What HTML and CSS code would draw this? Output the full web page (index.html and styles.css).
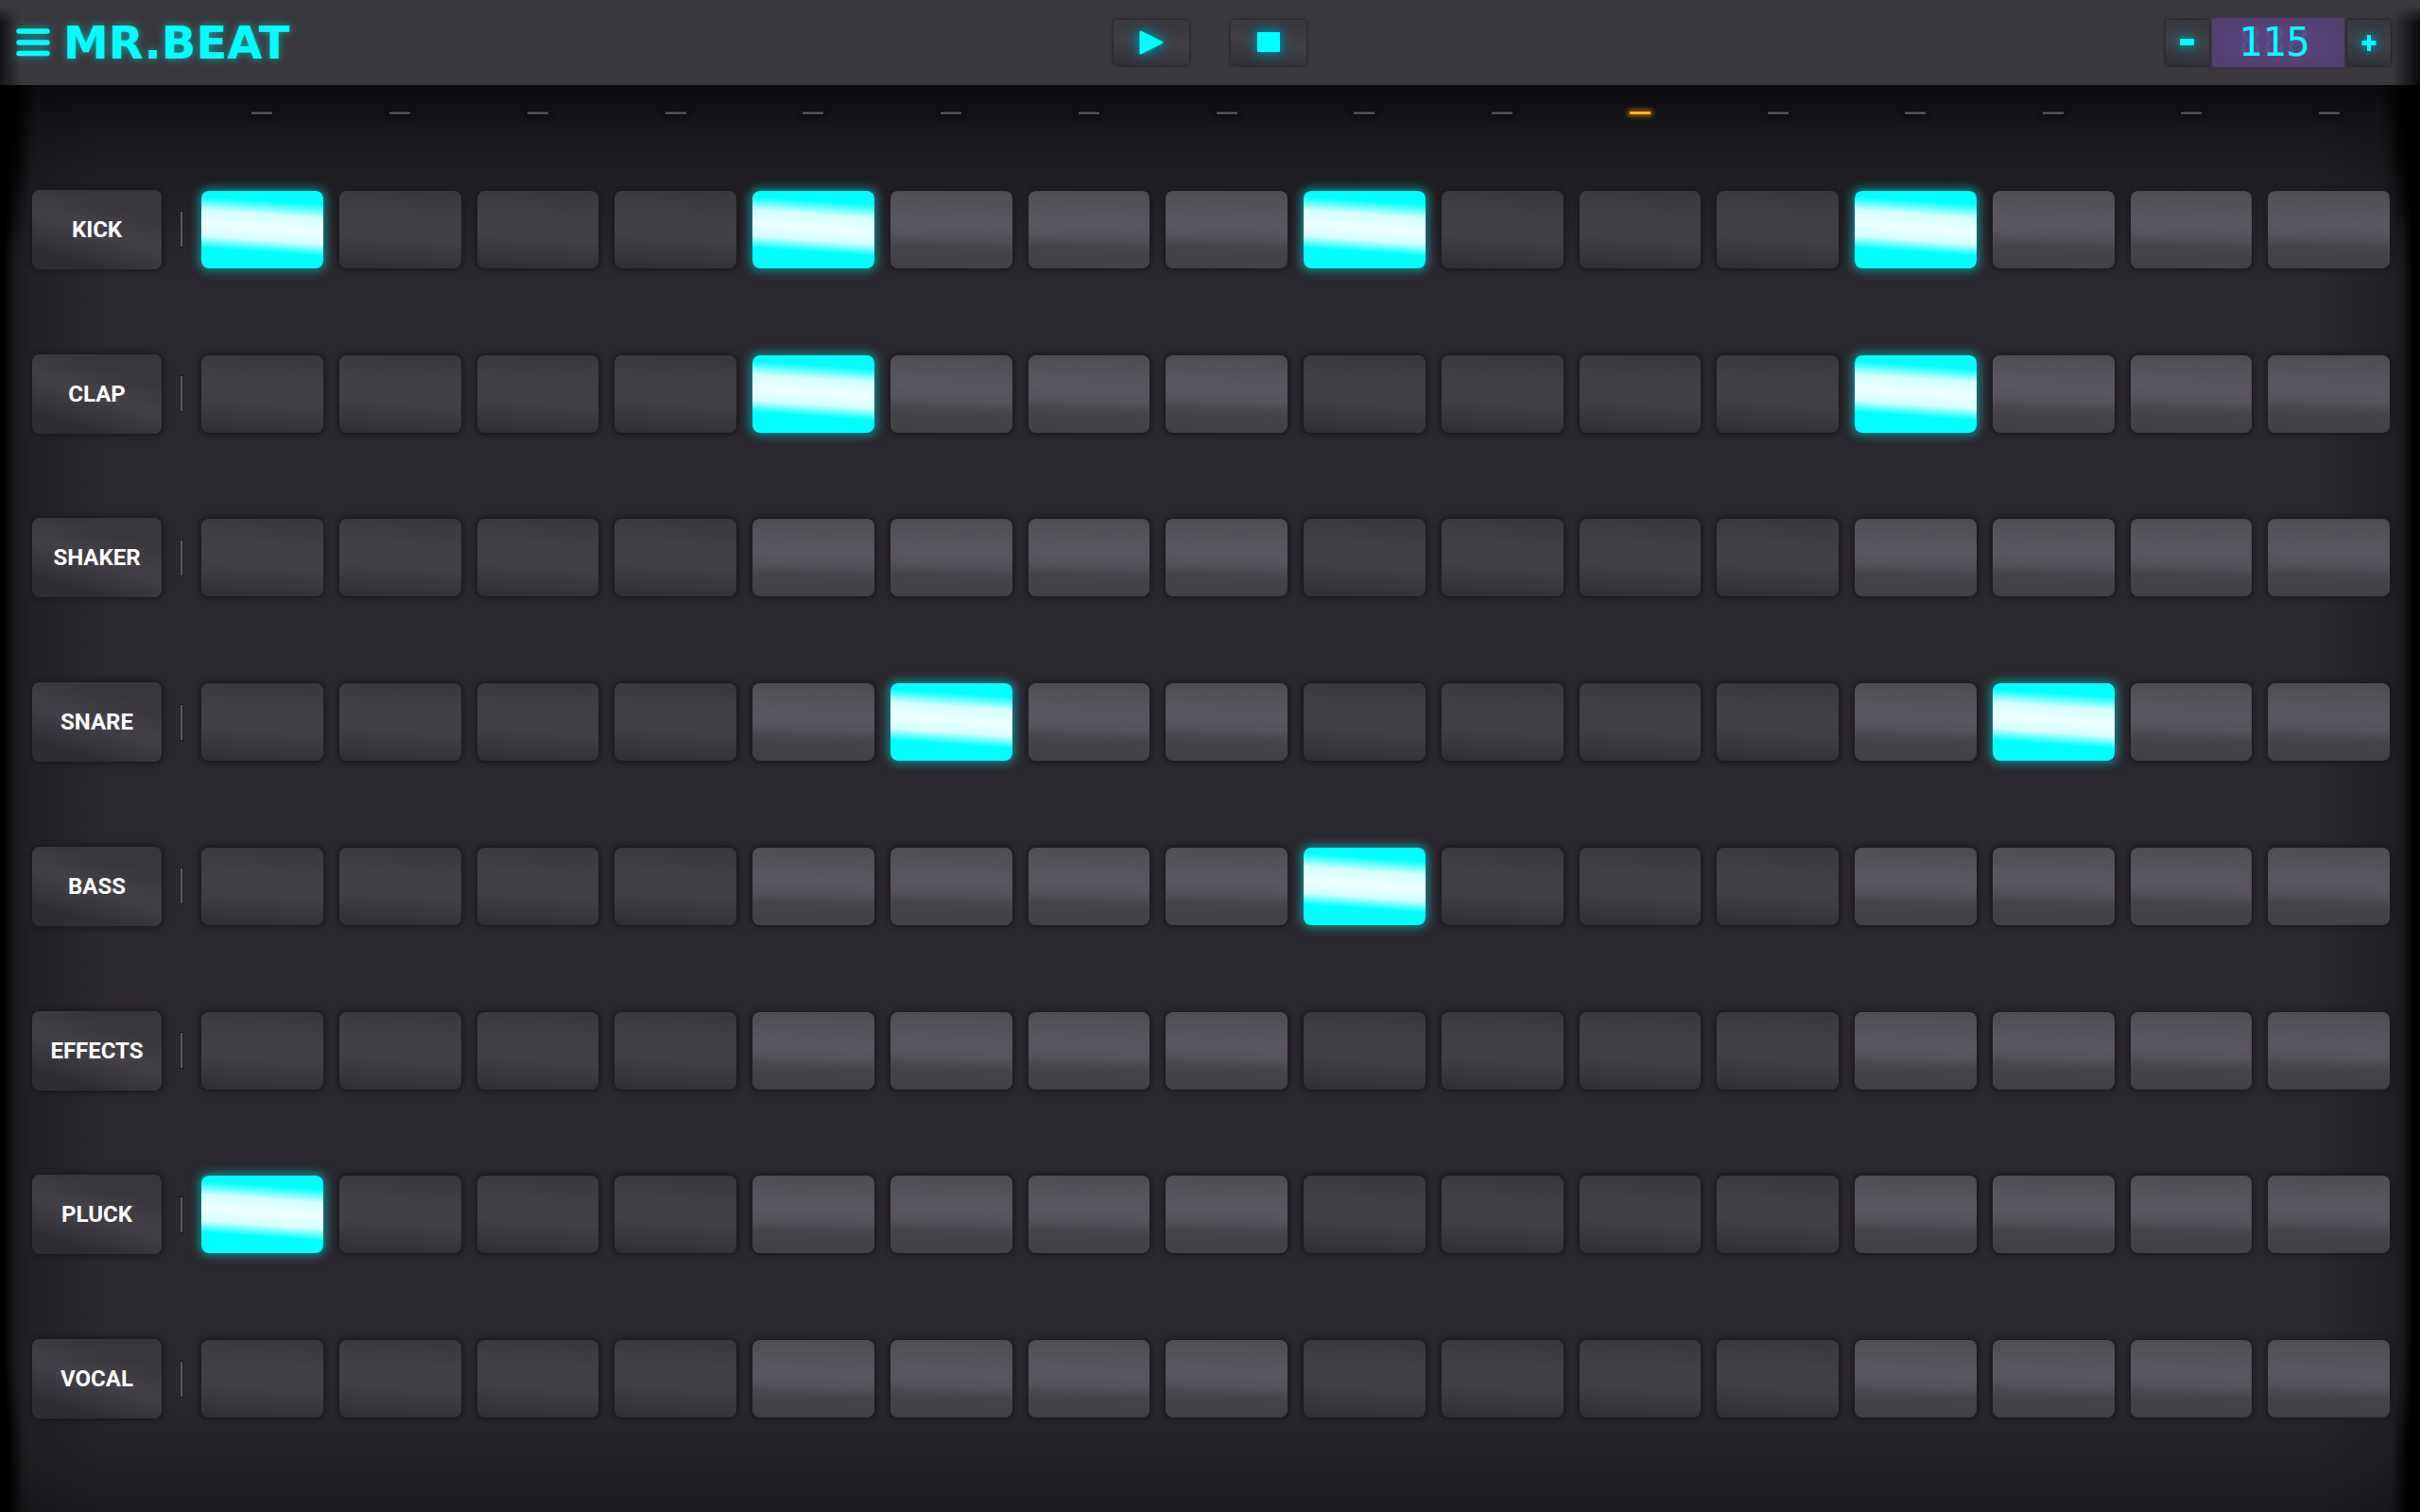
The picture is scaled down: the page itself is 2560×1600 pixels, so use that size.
FILE: index.html
```html
<!DOCTYPE html>
<html lang="en">
<head>
<meta charset="utf-8">
<meta name="viewport" content="width=device-width, initial-scale=1">
<title>Mr.Beat</title>
<link rel="stylesheet" href="styles.css">
</head>
<body>
<header class="topbar">
  <div class="brand">
    <button class="menu" type="button" aria-label="Menu">
      <svg width="36" height="30" viewBox="0 0 36 30" aria-hidden="true"><path d="M3 3H33M3 15H33M3 26.500H33" stroke="currentColor" stroke-width="5.500" stroke-linecap="round"/></svg>
    </button>
    <h1 class="logo">MR.BEAT</h1>
  </div>
  <div class="transport">
    <button class="key" type="button" aria-label="Play">
      <svg width="26" height="26" viewBox="0 0 26 26" aria-hidden="true"><path d="M1.500 1.500L24.500 13L1.500 24.500Z" fill="currentColor" stroke="currentColor" stroke-width="2" stroke-linejoin="round"/></svg>
    </button>
    <button class="key" type="button" aria-label="Stop">
      <svg width="26" height="22" viewBox="0 0 26 22" aria-hidden="true"><rect x="1" y="0" width="24" height="21" rx="1" fill="currentColor"/></svg>
    </button>
  </div>
  <div class="tempo">
    <button class="step-key" type="button" aria-label="Slower">
      <svg width="16" height="18" viewBox="0 0 16 18" aria-hidden="true"><path d="M0 5H15V12H0Z" fill="currentColor"/></svg>
    </button>
    <output class="display" aria-label="Tempo">115</output>
    <button class="step-key" type="button" aria-label="Faster">
      <svg width="16" height="18" viewBox="0 0 16 18" aria-hidden="true"><path d="M6 1H10V7H15.500V12H10V18H6V12H0.500V7H6Z" fill="currentColor"/></svg>
    </button>
  </div>
</header>
<main class="sequencer">
  <div class="leds" id="leds"></div>
  <div class="tracks" id="tracks"></div>
</main>
<script src="app.js"></script>
</body>
</html>
```
FILE: app.js
```js
const STEPS = 16;
const PLAYHEAD = 10;
const pattern = [
  ["KICK", [0, 4, 8, 12]],
  ["CLAP", [4, 12]],
  ["SHAKER", []],
  ["SNARE", [5, 13]],
  ["BASS", [8]],
  ["EFFECTS", []],
  ["PLUCK", [0]],
  ["VOCAL", []]
];

const leds = document.getElementById("leds");
for (let i = 0; i < STEPS; i++) {
  const led = document.createElement("span");
  led.className = i === PLAYHEAD ? "led led-on" : "led";
  leds.append(led);
}

const tracks = document.getElementById("tracks");
for (const [name, hits] of pattern) {
  const track = document.createElement("div");
  track.className = "track";

  const label = document.createElement("button");
  label.type = "button";
  label.className = "sample";
  label.textContent = name;

  const divider = document.createElement("span");
  divider.className = "divider";

  const pads = document.createElement("div");
  pads.className = "pads";
  for (let i = 0; i < STEPS; i++) {
    const pad = document.createElement("button");
    const on = hits.includes(i);
    pad.type = "button";
    pad.className = "pad" + (i % 8 > 3 ? " pad-light" : "") + (on ? " pad-on" : "");
    pad.setAttribute("aria-label", name + " step " + (i + 1));
    pad.setAttribute("aria-pressed", on);
    pad.addEventListener("click", () => {
      pad.setAttribute("aria-pressed", pad.classList.toggle("pad-on"));
    });
    pads.append(pad);
  }
  track.append(label, divider, pads);
  tracks.append(track);
}
```
FILE: styles.css
```css
* { box-sizing: border-box; }

body {
  margin: 0;
  min-height: 100vh;
  display: flex;
  flex-direction: column;
  background: #2b282f;
  font-family: Roboto, sans-serif;
}

button {
  margin: 0;
  padding: 0;
  border: 0;
  color: inherit;
  font: inherit;
  cursor: pointer;
}

svg { display: block; fill: none; overflow: visible; }

.topbar {
  height: 90px;
  flex: none;
  display: grid;
  grid-template-columns: 1fr auto 1fr;
  align-items: center;
  padding: 0 17px;
  color: #00ffff;
  background:
    linear-gradient(#3a383d 6px, rgba(58, 56, 61, 0) 24px),
    linear-gradient(90deg, #141318, rgba(20, 19, 24, 0) 22px),
    linear-gradient(270deg, #08070a, rgba(8, 7, 10, 0) 30px),
    #3a383d;
}

.brand { display: flex; align-items: center; gap: 14px; }
.menu { background: none; filter: drop-shadow(0 0 4px rgba(0, 255, 255, 0.5)); }
.logo {
  margin: 0;
  font: bold 48px/60px "DejaVu Sans", sans-serif;
  text-shadow: 0 0 8px rgba(0, 255, 255, 0.5);
}

.transport { display: flex; gap: 44px; }
.key, .step-key {
  display: flex;
  align-items: center;
  justify-content: center;
  height: 48px;
  background: linear-gradient(188deg, #37353a, #424045 50%, #302e34);
  box-shadow: 0 0 3px 1px #252328;
}
.key { width: 80px; border-radius: 4px; }
.step-key { width: 46px; border-radius: 2px; }
.key svg, .step-key svg {
  filter: drop-shadow(0 0 4px #0093b5) drop-shadow(0 0 8px #006f94);
}

.tempo {
  justify-self: end;
  display: flex;
  align-items: center;
  gap: 3px;
  margin-right: 14px;
}
.display {
  position: relative;
  isolation: isolate;
  width: 140px;
  height: 52px;
  padding-left: 28px;
  background: #5a437c;
  box-shadow: 0 0 0 2px #3b3347, inset 0 0 24px #4b4060;
  font: 42px/52px "DejaVu Sans Mono", monospace;
}
/* unlit segments behind the reading */
.display::before {
  content: "888";
  position: absolute;
  z-index: -1;
  color: #53508a;
}

.sequencer {
  flex: 1;
  display: flex;
  flex-direction: column;
  padding: 0 32px 54px 34px;
  background:
    linear-gradient(90deg, #000 4px, rgba(0, 0, 0, 0.4) 16px, rgba(10, 10, 12, 0.25) 30px, transparent 110px),
    linear-gradient(270deg, #000 8px, rgba(0, 0, 0, 0.4) 18px, rgba(10, 10, 12, 0.25) 32px, transparent 110px),
    radial-gradient(40px 200px at 0 0, #000 40%, transparent),
    radial-gradient(44px 200px at 100% 0, #000 40%, transparent),
    radial-gradient(26px 200px at 0 100%, #000 30%, transparent),
    radial-gradient(32px 200px at 100% 100%, #000 30%, transparent),
    linear-gradient(0deg, #1b1a1e, #252327 60px, rgba(43, 40, 47, 0) 130px),
    linear-gradient(#0b0a0f, #18171b 50px, #232126 120px, #2b282f 200px);
}

.leds, .pads {
  display: grid;
  grid-template-columns: repeat(16, 1fr);
  column-gap: 17px;
}
.leds { height: 66px; padding: 28px 0 0 179px; justify-items: center; }
.led {
  width: 22px;
  height: 3px;
  border-top: 1px solid #2f2e32;
  border-bottom: 1px solid #47454a;
  background: #626065;
  box-shadow: 0 0 4px 3px #0f0e12;
}
.led-on {
  border-color: #ff9f0a;
  background: #ffd33c;
  box-shadow: 0 0 5px 2px #9a5d08;
}

.tracks { flex: 1; display: grid; grid-auto-rows: 1fr; }
.track {
  min-height: 104px;
  display: grid;
  grid-template-columns: 137px 42px 1fr;
  align-items: center;
}
.sample {
  height: 84px;
  border-radius: 8px;
  color: #fff;
  background: linear-gradient(197deg, #38363b 22%, #424046 48%, #403e44 56%, #2f2d33 82%);
  box-shadow: 0 0 5px 2px #1a181c;
  font-size: 24px;
  font-weight: 700;
  line-height: 28px;
}
.divider {
  justify-self: center;
  width: 4px;
  height: 39px;
  border: 1px solid #1a191c;
  background: #615f64;
}
.pad {
  height: 82px;
  border-radius: 8px;
  background: linear-gradient(184deg, #39373c, #414045 35%, #414045 60%, #302e34);
  box-shadow: 0 0 5px 2px #1a181c;
}
.pad-light { background: linear-gradient(182deg, #4e4c51, #5a5761 42%, #56535c 55%, #454349 75%, #404044); }
.pad-on {
  background: linear-gradient(184deg, #00ffff 16%, #d5ffff 32%, #edffff 48%, #d5ffff 62%, #00ffff 76%);
  box-shadow: 0 0 10px 3px rgba(0, 220, 230, 0.5);
}
```
